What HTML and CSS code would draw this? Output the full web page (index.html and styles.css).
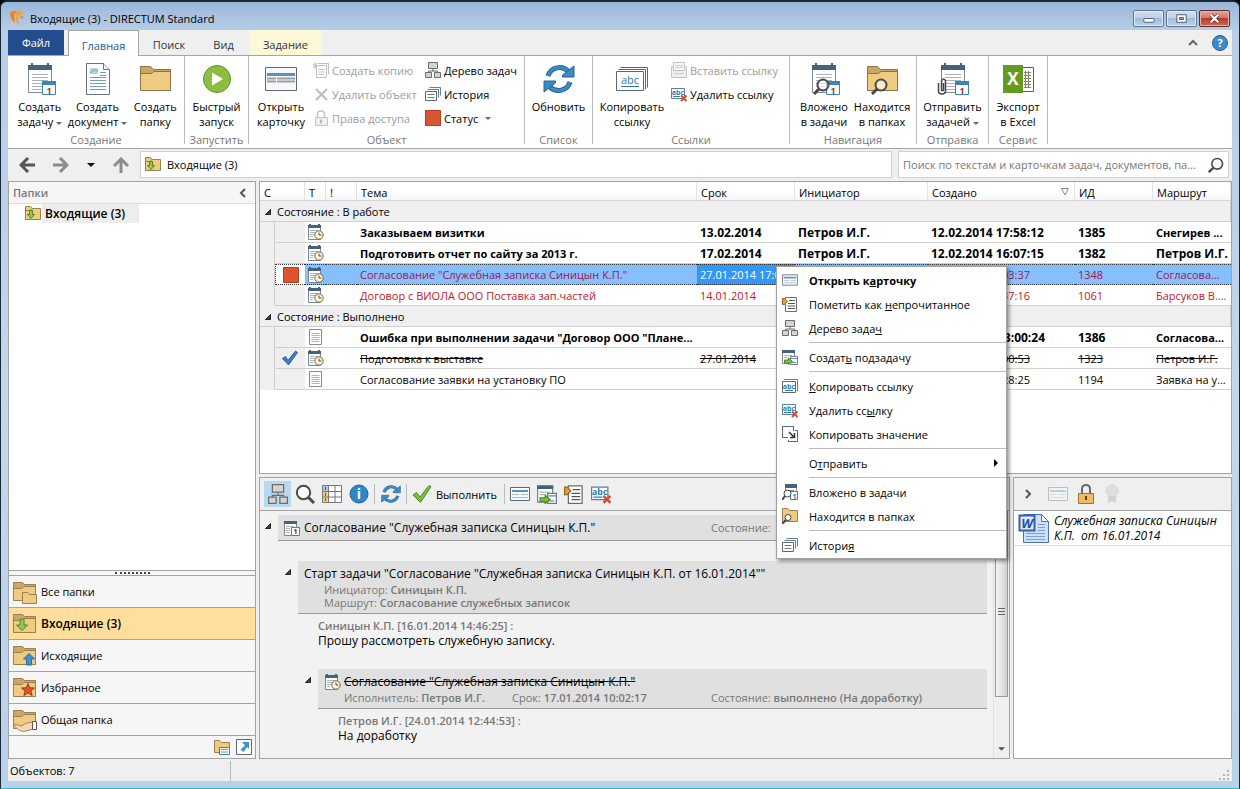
FILE: index.html
```html
<!DOCTYPE html>
<html lang="ru">
<head>
<meta charset="utf-8">
<title>Входящие (3) - DIRECTUM Standard</title>
<link rel="stylesheet" href="styles.css">
</head>
<body>
<svg class="sprite" aria-hidden="true">
  <symbol id="i-logo" viewBox="0 0 16 16"><path d="M1 3q1-2 4-2h3L6 4q-1 1-.5 4L6 13Q1 9 1 3z" fill="#f0831a"/><path d="M7 5q0-3 4-4l4 2-4 2q-2 1-2 3l1 7Q6 11 7 5z" fill="#f9a02b"/><path d="M11 7l2-1 2 1-3 2z" fill="#f0831a"/></symbol>
  <symbol id="i-task" viewBox="0 0 32 32"><path d="M4.500 5.500h23v24h-23z" fill="#fff" stroke="#7b8794"/><path d="M4 2h24v5H4z" fill="#46617c"/><path d="M7 0h2v3H7zM23 0h2v3h-2z" fill="#46617c"/><path d="M8 11.500h16M8 14.500h16M8 17.500h16M8 20.500h10M8 23.500h10M8 26.500h10" stroke="#a9b1b9"/><path d="M18.500 18.500h13v13h-13z" fill="#fff" stroke="#3b84b8"/><path d="M18 18h14v4H18z" fill="#3b84b8"/><text x="25" y="30.500" text-anchor="middle" font-size="9" font-weight="700" fill="#a0303c">1</text></symbol>
  <symbol id="i-doc" viewBox="0 0 32 32"><path d="M4.500.5h17l6 6v25h-23z" fill="#fff" stroke="#6b7680"/><path d="M21.500.5v6h6" fill="#eef" stroke="#6b7680"/><path d="M8 5h8v6H8z" fill="#bcd2da"/><path d="M8 10l4-3 4 1" stroke="#6da1bd" fill="none"/><path d="M18 9.500h6M18 12.500h6M8 14.500h16M8 17.500h16M8 20.500h16M8 23.500h16M8 26.500h16" stroke="#6ba3bd"/></symbol>
  <symbol id="i-folder" viewBox="0 0 32 32"><path d="M1.500 27.500v-24h10l3 3h17v21z" fill="#c9a566" stroke="#8d7546"/><path d="M2 10.500h10l3-2h16V27H2z" fill="#eecb80"/><path d="M2 10.500h10l3-2h16" stroke="#8d7546" fill="none"/></symbol>
  <symbol id="i-play" viewBox="0 0 32 32"><circle cx="16" cy="16" r="13.500" fill="#8cbf3f" stroke="#5f8f2d"/><path d="M11 9.500v13l11-6.500z" fill="#fff"/></symbol>
  <symbol id="i-card" viewBox="0 0 32 32"><path d="M.5 4.500h31v23H.5z" fill="#f6f8fa" stroke="#5f676f"/><path d="M2 10h28v3H2z" fill="#5c93b5"/><path d="M2 15.500h9M12 15.500h18M2 18.500h9M12 18.500h18" stroke="#9aa0a6" stroke-width="2"/></symbol>
  <symbol id="i-card-s" viewBox="0 0 20 16"><path d="M.5 1.500h19v13H.5z" fill="#f8fbfe" stroke="#5f676f"/><path d="M2 5h16" stroke="#5c93b5" stroke-width="2"/><path d="M2 8.500h7M11 8.500h7M2 11.500h16" stroke="#a5b8c8"/></symbol>
  <symbol id="i-refresh" viewBox="0 0 32 32"><path d="M5 13A12 12 0 0 1 25 8M27 19A12 12 0 0 1 7 24" fill="none" stroke="#2a6294" stroke-width="5"/><path d="M5 13A12 12 0 0 1 25 8M27 19A12 12 0 0 1 7 24" fill="none" stroke="#3d8bc4" stroke-width="3"/><path d="M31 3v11H19.500v-2zM1 29V18h11.500v2z" fill="#3d8bc4" stroke="#2a6294"/></symbol>
  <symbol id="i-link" viewBox="0 0 32 32"><path d="M4.500 4.500h27v20M2.500 6.500h27v20" fill="none" stroke="#5f676f"/><path d="M.5 8.500h27v19H.5z" fill="#fff" stroke="#5f676f"/><text x="14" y="21" text-anchor="middle" font-size="11" fill="#2f7cb4">abc</text><path d="M5 23.500h18" stroke="#2f7cb4"/></symbol>
  <symbol id="i-link-s" viewBox="0 0 16 16"><path d="M2 1.500h13.500V13" fill="none" stroke="#5f7f9c"/><path d="M.5 3.500h13v11H.5z" fill="#fff" stroke="#5f676f"/><text x="7" y="11" text-anchor="middle" font-size="7" font-weight="700" fill="#2f7cb4">abc</text><path d="M3 12.500h8" stroke="#2f7cb4"/></symbol>
  <symbol id="i-unlink" viewBox="0 0 16 16"><path d="M.5 2.500h13v10H.5z" fill="#fff" stroke="#5f7f9c"/><text x="7" y="9" text-anchor="middle" font-size="7" font-weight="700" fill="#2f7cb4">abc</text><path d="M2 10.500h7" stroke="#2f7cb4"/><path d="M10 9.500l5.500 5.500M15.500 9.500L10 15" stroke="#cf4f31" stroke-width="2"/></symbol>
  <symbol id="i-paste" viewBox="0 0 16 16"><path d="M.5 4.500h15v11H.5z" fill="#eee" stroke="#c4c4c4"/><path d="M2.500.5h11v8h-11z" fill="#fafafa" stroke="#c4c4c4"/><path d="M4 3.500h8M4 5.500h8M3 11.500h10" stroke="#ccc"/></symbol>
  <symbol id="i-copy" viewBox="0 0 16 16"><path d="M5 1.500h10.500V12M3.500 15.500v-12h10v12z" fill="none" stroke="#c0c0c0"/><path d="M5.500 7.500h6M5.500 10h6M5.500 12.500h6M0 2l4 4M4 1L0 6M2 0v7" stroke="#c0c0c0"/></symbol>
  <symbol id="i-x" viewBox="0 0 16 16"><path d="M3 3l11 11M14 3L3 14" stroke="#bdbdbd" stroke-width="2"/></symbol>
  <symbol id="i-lock-off" viewBox="0 0 16 16"><path d="M4.500 7V4q0-3 3.500-3t3.500 3v3" fill="none" stroke="#c4c4c4" stroke-width="1.500"/><path d="M2.500 7.500h12v8h-12z" fill="#f0f0f0" stroke="#c4c4c4"/><path d="M8 9.500v4" stroke="#bbb" stroke-width="2"/></symbol>
  <symbol id="i-tree" viewBox="0 0 16 16"><path d="M3.500.5h9v6h-9z" fill="#d4d4d4" stroke="#6c6c6c"/><path d="M8 6.500v3M3.500 11V9h9v2" fill="none" stroke="#6c6c6c"/><path d="M.5 10.500h6v5h-6zM9.500 10.500h6v5h-6z" fill="#d4d4d4" stroke="#6c6c6c"/></symbol>
  <symbol id="i-hist" viewBox="0 0 16 16"><path d="M4.500 1.500h11v8M2.500 3.500h11v8" fill="none" stroke="#5f7f9c"/><path d="M.5 5.500h11v9H.5z" fill="#fff" stroke="#5f676f"/><path d="M2.500 8.500h7M2.500 11.500h7" stroke="#777"/></symbol>
  <symbol id="i-red" viewBox="0 0 16 16"><path d="M.5.5h15v15H.5z" fill="#d9542f" stroke="#b23f22"/></symbol>
  <symbol id="i-lens-over" viewBox="0 0 32 32"><circle cx="15" cy="22" r="5.500" fill="#fff" fill-opacity=".6" stroke="#4a4a4a" stroke-width="2"/><path d="M11 26l-5 5" stroke="#4a4a4a" stroke-width="3"/></symbol>
  <symbol id="i-clip" viewBox="0 0 32 32"><path d="M6.500 20v7q-1 1.500-2 0v-9q.5-2 2-2t2 2v10q0 3-3.500 3T1.500 28v-8" fill="#fff" stroke="#444" stroke-width="1.500"/></symbol>
  <symbol id="i-excel" viewBox="0 0 32 32"><path d="M20 4.500h11.500v24H20" fill="#fff" stroke="#55702b"/><path d="M23.500 8v17M26.500 8v17M22 9.500h7M22 12.500h7M22 15.500h7M22 18.500h7M22 21.500h7M22 24.500h7" stroke="#7d8a6b"/><path d="M1 2h20v28H1z" fill="#639a1f"/><text x="11" y="22" text-anchor="middle" font-size="17" font-weight="700" fill="#fff">X</text></symbol>
  <symbol id="i-inbox" viewBox="0 0 16 16"><path d="M.5 13.500v-13h5l2 2h8v11z" fill="#eecb80" stroke="#9a814d"/><path d="M1 4.500h4l2-2h8" fill="none" stroke="#9a814d"/><path d="M4.500 4.500v4h-2L6 12.500l3.500-4h-2v-4z" fill="#8ecb4c" stroke="#4f8430"/></symbol>
  <symbol id="i-taskclock" viewBox="0 0 16 16"><path d="M.5 2.500h12v13H.5z" fill="#fff" stroke="#7b8794"/><path d="M0 1h13v3H0z" fill="#46617c"/><path d="M1 0h2v2H1zM10 0h2v2h-2z" fill="#46617c"/><path d="M2 6.500h8M2 8.500h5M2 10.500h4M2 12.500h3" stroke="#aeb5bb"/><circle cx="11" cy="11" r="4.200" fill="#fff6dc" stroke="#7a6543"/><path d="M11 8.500V11h2.500" fill="none" stroke="#5d4a2f"/></symbol>
  <symbol id="i-task-s" viewBox="0 0 16 16"><path d="M.5 2.500h12v13H.5z" fill="#fff" stroke="#7b8794"/><path d="M0 1h13v3H0z" fill="#46617c"/><path d="M2 6.500h8M2 8.500h4M2 10.500h4M2 12.500h4" stroke="#aeb5bb"/><path d="M7.500 7.500h8v8h-8z" fill="#fff" stroke="#3b84b8"/><text x="11.500" y="14" text-anchor="middle" font-size="7" font-weight="700" fill="#333">1</text></symbol>
  <symbol id="i-note" viewBox="0 0 16 16"><path d="M1.500.5h12v15h-12z" fill="#fff" stroke="#8a8a8a"/><path d="M3.500 4.500h8M3.500 6.500h8M3.500 8.500h8M3.500 10.500h8M3.500 12.500h8" stroke="#b4b4b4"/></symbol>
  <symbol id="i-check" viewBox="0 0 16 16"><path d="M.5 8.500l3-2 2.500 4L13.500 1l2 1.500L6.500 15z" fill="#3d7fbf" stroke="#2c639c"/></symbol>
  <symbol id="i-check-g" viewBox="0 0 20 20"><path d="M1 11l3.500-2.500 3.500 4.500L17 1.500l2 1L8.500 18.500z" fill="#7fbf3b" stroke="#4b8a2c"/></symbol>
  <symbol id="i-unread" viewBox="0 0 16 16"><path d="M3.500 1.500h11v14h-11z" fill="#fff" stroke="#6c6c6c"/><path d="M7 4.500h6M6 7.500h7M6 10h7M6 12.500h7" stroke="#555"/><path d="M.5 2.500h2l3 3-3 3h-2z" fill="#e8a13a" stroke="#9a651c"/></symbol>
  <symbol id="i-sub" viewBox="0 0 16 16"><path d="M.5 2.500h12v12H.5z" fill="#fff" stroke="#7b8794"/><path d="M0 1h13v3H0z" fill="#46617c"/><path d="M2 6.500h8M2 8.500h4" stroke="#aeb5bb"/><path d="M8.500 7.500h7v8h-7z" fill="#fff" stroke="#5f7f9c"/><path d="M9 9.500h6M10 13.500h4" stroke="#7a8b99"/><path d="M2.500 11h4V9l4 3.500-4 3V14h-4z" fill="#7fbf3b" stroke="#4b8a2c"/></symbol>
  <symbol id="i-copyval" viewBox="0 0 16 16"><path d="M6 11.500H.5V.5h11V5" fill="#fff" stroke="#5f676f"/><path d="M13 4.500h2.500v11h-9V14" fill="none" stroke="#5f676f"/><path d="M7 6l5 5M12.500 7v4.500H8" fill="none" stroke="#333" stroke-width="1.500"/></symbol>
  <symbol id="i-intask" viewBox="0 0 16 16"><path d="M3.500 3v5M14.500 3v5M6 6.500h6" stroke="#8a8a8a"/><path d="M3 0h12v4H3z" fill="#46617c"/><path d="M8.500 7.500h7v8h-7z" fill="#fff" stroke="#3b84b8"/><text x="12.500" y="14.500" text-anchor="middle" font-size="7" font-weight="700" fill="#2f7cb4">1</text><circle cx="5.500" cy="9.500" r="3.500" fill="#fff" stroke="#444"/><path d="M3 12l-3 4" stroke="#444" stroke-width="2"/></symbol>
  <symbol id="i-infolder" viewBox="0 0 16 16"><path d="M.5 13.500v-13h5l2 2h8v11z" fill="#eecb80" stroke="#9a814d"/><circle cx="6" cy="9.500" r="3" fill="#fff" stroke="#444"/><path d="M4 12l-4 4" stroke="#444" stroke-width="2"/></symbol>
  <symbol id="i-lens" viewBox="0 0 20 20"><circle cx="8.500" cy="8.500" r="6.700" fill="#f7fafc" stroke="#4a4a4a" stroke-width="2"/><path d="M13.500 13.500l5.500 5.500" stroke="#4a4a4a" stroke-width="3"/></symbol>
  <symbol id="i-grid" viewBox="0 0 20 20"><path d="M.5 1.500h19v17H.5z" fill="#fff" stroke="#777"/><path d="M1 2h5v5H1z" fill="#a3cde8"/><path d="M1 7h5v11H1z" fill="#f0cf80"/><path d="M6.500 2v16M13 2v16M1 7.500h18M1 13h18" stroke="#777"/><path d="M3.500 3v3M3.500 9v3M3.500 14v3" stroke="#555"/></symbol>
  <symbol id="i-info" viewBox="0 0 20 20"><circle cx="10" cy="10" r="9" fill="#2f86c9" stroke="#215f93"/><text x="10" y="15" text-anchor="middle" font-size="14" font-weight="700" fill="#fff">i</text></symbol>
  <symbol id="i-help" viewBox="0 0 16 16"><circle cx="8" cy="8" r="7.500" fill="#3d8bc9" stroke="#215f93"/><text x="8" y="12" text-anchor="middle" font-size="11" font-weight="700" fill="#fff">?</text></symbol>
  <symbol id="i-lock" viewBox="0 0 16 20"><path d="M4 9V5q0-4 4-4t4 4v4" fill="none" stroke="#6b6b6b" stroke-width="2"/><path d="M.5 9.500h15v10H.5z" fill="#eebb66" stroke="#9a7436"/><path d="M8 12v4" stroke="#5b431c" stroke-width="2"/></symbol>
  <symbol id="i-seal" viewBox="0 0 16 20"><path d="M4 11v8l4-2 4 2v-8" fill="#d3d3d3"/><circle cx="8" cy="7" r="6" fill="#dedede" stroke="#ccc" stroke-dasharray="2 1"/></symbol>
  <symbol id="i-word" viewBox="0 0 32 32"><path d="M5.500 2.500h18l7 7v21h-25z" fill="#cfdff8" stroke="#4870b8"/><path d="M23.500 2.500v7h7z" fill="#fff" stroke="#4870b8"/><path d="M8 21.500h19M8 24.500h19M8 27.500h19M20 12.500h7M20 15.500h7M20 18.500h7" stroke="#7f9fd6"/><path d="M1.500 3.500h15v15h-15z" fill="#dfe9fb" stroke="#3560b0" stroke-width="2"/><text x="9" y="16" text-anchor="middle" font-size="13" font-weight="700" font-style="italic" fill="#2450a6">W</text></symbol>
  <symbol id="i-nav" viewBox="0 0 24 24"><path d="M.5 20.500v-18h9l2 2h11v16z" fill="#caa768" stroke="#9a814d"/><path d="M1 8.500h8l2-2h11V20H1z" fill="#eecb80"/><path d="M1 8.500h8l2-2h11" fill="none" stroke="#9a814d"/></symbol>
  <symbol id="o-all" viewBox="0 0 24 24"><path d="M9.500 23.500v-11h5l2 2h7v9z" fill="#eecb80" stroke="#9a814d"/></symbol>
  <symbol id="o-in" viewBox="0 0 24 24"><path d="M7 7v6H3.500L9 18.500 14.500 13H11V7z" fill="#8ecb4c" stroke="#4f8430"/></symbol>
  <symbol id="o-out" viewBox="0 0 24 24"><path d="M13.500 21v-6h-3l5.500-5.500 5.500 5.500h-3v6z" fill="#3f93cc" stroke="#2c6a99"/></symbol>
  <symbol id="o-star" viewBox="0 0 24 24"><path d="M15 7.500l1.800 4.200 4.700.3-3.600 3 1.200 4.500-4.100-2.500-4.100 2.500 1.200-4.500-3.600-3 4.700-.3z" fill="#d9542f" stroke="#a83c1c"/></symbol>
  <symbol id="o-hand" viewBox="0 0 24 24"><path d="M0 16q5 1 8 2l6-3 6-1v7l-7 2q-7 2-13-7z" fill="#f3d9b8" stroke="#a98559"/><path d="M19.500 13.500h4v8h-4z" fill="#fff" stroke="#555"/></symbol>
  <symbol id="i-foldlist" viewBox="0 0 16 16"><path d="M.5 13.500v-12h5l2 2h8v10z" fill="#eecb80" stroke="#9a814d"/><path d="M5.500 8.500h10v7h-10z" fill="#fff" stroke="#4d7ba3"/><path d="M7 10.500h7M7 13h7" stroke="#4d9bd0"/></symbol>
  <symbol id="i-short" viewBox="0 0 16 16"><path d="M.5.5h15v15H.5z" fill="#fff" stroke="#5b6b7a"/><path d="M6 3h7v7l-2-2-3.500 5-3-2.500L9 6.500z" fill="#3f93cc"/></symbol>
  <symbol id="a-left" viewBox="0 0 16 16"><path d="M16 8H3M9 1L2 8l7 7" fill="none" stroke="currentColor" stroke-width="3"/></symbol>
  <symbol id="a-chev" viewBox="0 0 8 10"><path d="M6 1L2 5l4 4" fill="none" stroke="currentColor" stroke-width="2"/></symbol>
  <symbol id="a-down" viewBox="0 0 8 4"><path d="M0 0h8L4 4z" fill="currentColor"/></symbol>
  <symbol id="a-node" viewBox="0 0 8 8"><path d="M6.500 1.500v5h-5z" fill="#444" stroke="#222"/></symbol>
</svg>

<div class="window">
  <header class="titlebar">
    <svg class="s16"><use href="#i-logo"/></svg>
    <h1 class="caption">Входящие (3) - DIRECTUM Standard</h1>
    <div class="winbtns">
      <button class="winbtn" aria-label="Свернуть"><svg viewBox="0 0 30 16"><rect x="10" y="8" width="11" height="4" rx="1" fill="#fff" stroke="#4b5a70"/></svg></button>
      <button class="winbtn" aria-label="Развернуть"><svg viewBox="0 0 30 16"><rect x="10" y="4" width="10" height="8" fill="#fff" stroke="#4b5a70"/><rect x="13" y="7" width="4" height="2" fill="#9db4d2" stroke="#4b5a70"/></svg></button>
      <button class="winbtn winbtn-close" aria-label="Закрыть"><svg viewBox="0 0 30 16"><path d="M11 4l8 8M19 4l-8 8" stroke="#5b2b30" stroke-width="4"/><path d="M11 4l8 8M19 4l-8 8" stroke="#fff" stroke-width="2.500"/></svg></button>
    </div>
  </header>

  <div class="client">
    <nav class="tabs">
      <button class="tab tab-file">Файл</button>
      <button class="tab tab-active">Главная</button>
      <button class="tab">Поиск</button>
      <button class="tab tab-narrow">Вид</button>
      <button class="tab tab-context">Задание</button>
      <span class="tabs-tools">
        <button class="bare" aria-label="Свернуть ленту"><svg class="up-chev" viewBox="0 0 10 8"><path d="M1 6l4-4 4 4" fill="none" stroke="#666" stroke-width="2"/></svg></button>
        <button class="bare" aria-label="Справка"><svg class="s16"><use href="#i-help"/></svg></button>
      </span>
    </nav>

    <section class="ribbon">
      <div class="group g-create">
        <div class="tools">
          <button class="big"><svg class="s32"><use href="#i-task"/></svg><span>Создать<br>задачу <svg class="dd"><use href="#a-down"/></svg></span></button>
          <button class="big"><svg class="s32"><use href="#i-doc"/></svg><span>Создать<br>документ <svg class="dd"><use href="#a-down"/></svg></span></button>
          <button class="big"><svg class="s32"><use href="#i-folder"/></svg><span>Создать<br>папку</span></button>
        </div>
        <div class="glabel">Создание</div>
      </div>
      <div class="group g-run">
        <div class="tools"><button class="big"><svg class="s32"><use href="#i-play"/></svg><span>Быстрый<br>запуск</span></button></div>
        <div class="glabel">Запустить</div>
      </div>
      <div class="group g-object">
        <div class="tools">
          <button class="big big-wide"><svg class="s32"><use href="#i-card"/></svg><span>Открыть<br>карточку</span></button>
          <div class="stack stack-first">
            <button class="small" disabled><svg class="s16"><use href="#i-copy"/></svg>Создать копию</button>
            <button class="small" disabled><svg class="s16"><use href="#i-x"/></svg>Удалить объект</button>
            <button class="small" disabled><svg class="s16"><use href="#i-lock-off"/></svg>Права доступа</button>
          </div>
          <div class="stack">
            <button class="small"><svg class="s16"><use href="#i-tree"/></svg>Дерево задач</button>
            <button class="small"><svg class="s16"><use href="#i-hist"/></svg>История</button>
            <button class="small"><svg class="s16"><use href="#i-red"/></svg>Статус <svg class="dd dd-gap"><use href="#a-down"/></svg></button>
          </div>
        </div>
        <div class="glabel">Объект</div>
      </div>
      <div class="group g-list">
        <div class="tools"><button class="big big-wide"><svg class="s32"><use href="#i-refresh"/></svg><span>Обновить</span></button></div>
        <div class="glabel">Список</div>
      </div>
      <div class="group g-links">
        <div class="tools">
          <button class="big big-xwide"><svg class="s32"><use href="#i-link"/></svg><span>Копировать<br>ссылку</span></button>
          <div class="stack">
            <button class="small" disabled><svg class="s16"><use href="#i-paste"/></svg>Вставить ссылку</button>
            <button class="small"><svg class="s16"><use href="#i-unlink"/></svg>Удалить ссылку</button>
          </div>
        </div>
        <div class="glabel">Ссылки</div>
      </div>
      <div class="group g-navi">
        <div class="tools">
          <button class="big"><svg class="s32"><use href="#i-task"/><use href="#i-lens-over"/></svg><span>Вложено<br>в задачи</span></button>
          <button class="big"><svg class="s32"><use href="#i-folder"/><use href="#i-lens-over"/></svg><span>Находится<br>в папках</span></button>
        </div>
        <div class="glabel">Навигация</div>
      </div>
      <div class="group g-send">
        <div class="tools"><button class="big big-wide"><svg class="s32"><use href="#i-task"/><use href="#i-clip"/></svg><span>Отправить<br>задачей <svg class="dd"><use href="#a-down"/></svg></span></button></div>
        <div class="glabel">Отправка</div>
      </div>
      <div class="group g-serv">
        <div class="tools"><button class="big"><svg class="s32"><use href="#i-excel"/></svg><span>Экспорт<br>в Excel</span></button></div>
        <div class="glabel">Сервис</div>
      </div>
    </section>

    <div class="address">
      <div class="history">
        <button class="bare c-dark" aria-label="Назад"><svg class="s16"><use href="#a-left"/></svg></button>
        <button class="bare c-mid" aria-label="Вперёд"><svg class="s16 flip"><use href="#a-left"/></svg></button>
        <button class="bare c-black" aria-label="Журнал"><svg class="dd"><use href="#a-down"/></svg></button>
        <button class="bare c-mid" aria-label="Вверх"><svg class="s16 turn"><use href="#a-left"/></svg></button>
      </div>
      <div class="field field-path"><svg class="s16"><use href="#i-inbox"/></svg><input aria-label="Адрес" value="Входящие (3)"></div>
      <div class="field field-search"><input type="text" aria-label="Поиск" placeholder="Поиск по текстам и карточкам задач, документов, па..."><svg class="s16 mirror"><use href="#i-lens"/></svg></div>
    </div>

    <main class="work">
      <aside class="side">
        <div class="side-head"><h2>Папки</h2><button class="bare c-dark" aria-label="Скрыть"><svg class="chev"><use href="#a-chev"/></svg></button></div>
        <div class="tree"><a class="tree-item" href="#"><svg class="s16"><use href="#i-inbox"/></svg><b>Входящие (3)</b></a></div>
        <div class="grip"><i></i></div>
        <nav class="nav">
          <a href="#"><svg class="s24"><use href="#i-nav"/><use href="#o-all"/></svg>Все папки</a>
          <a href="#" class="on"><svg class="s24"><use href="#i-nav"/><use href="#o-in"/></svg>Входящие (3)</a>
          <a href="#"><svg class="s24"><use href="#i-nav"/><use href="#o-out"/></svg>Исходящие</a>
          <a href="#"><svg class="s24"><use href="#i-nav"/><use href="#o-star"/></svg>Избранное</a>
          <a href="#"><svg class="s24"><use href="#i-nav"/><use href="#o-hand"/></svg>Общая папка</a>
        </nav>
        <div class="side-foot">
          <button class="bare" aria-label="Список папок"><svg class="s16"><use href="#i-foldlist"/></svg></button>
          <button class="bare" aria-label="Ярлыки"><svg class="s16"><use href="#i-short"/></svg></button>
        </div>
      </aside>

      <div class="right">
        <section class="list">
          <table class="grid">
            <colgroup><col class="c-ind"><col class="c-s"><col class="c-t"><col class="c-i"><col><col class="c-term"><col class="c-init"><col class="c-made"><col class="c-id"><col class="c-route"></colgroup>
            <thead><tr><th colspan="2">С</th><th>Т</th><th>!</th><th>Тема</th><th>Срок</th><th>Инициатор</th><th><span class="sorted">Создано<svg class="sort" viewBox="0 0 8 8"><path d="M.5.5h7L4 7z" fill="none" stroke="#888"/></svg></span></th><th>ИД</th><th>Маршрут</th></tr></thead>
            <tbody>
              <tr class="grp"><td colspan="10"><svg class="node"><use href="#a-node"/></svg>Состояние : В работе</td></tr>
              <tr class="new"><td></td><td></td><td><svg class="s16"><use href="#i-taskclock"/></svg></td><td></td><td>Заказываем визитки</td><td class="num">13.02.2014</td><td class="num">Петров И.Г.</td><td class="num">12.02.2014 17:58:12</td><td class="num">1385</td><td>Снегирев ...</td></tr>
              <tr class="new"><td></td><td></td><td><svg class="s16"><use href="#i-taskclock"/></svg></td><td></td><td>Подготовить отчет по сайту за 2013 г.</td><td class="num">17.02.2014</td><td class="num">Петров И.Г.</td><td class="num">12.02.2014 16:07:15</td><td class="num">1382</td><td class="num">Петров И.Г.</td></tr>
              <tr class="late sel"><td></td><td><svg class="s16"><use href="#i-red"/></svg></td><td><svg class="s16"><use href="#i-taskclock"/></svg></td><td></td><td>Согласование "Служебная записка Синицын К.П."</td><td class="cell-on">27.01.2014 17:0</td><td></td><td class="tail">03:37</td><td>1348</td><td>Согласова...</td></tr>
              <tr class="late"><td></td><td></td><td><svg class="s16"><use href="#i-taskclock"/></svg></td><td></td><td>Договор с ВИОЛА ООО Поставка зап.частей</td><td>14.01.2014</td><td></td><td class="tail">37:16</td><td>1061</td><td>Барсуков В....</td></tr>
              <tr class="grp"><td colspan="10"><svg class="node"><use href="#a-node"/></svg>Состояние : Выполнено</td></tr>
              <tr class="new"><td></td><td></td><td><svg class="s16"><use href="#i-note"/></svg></td><td></td><td>Ошибка при выполнении задачи "Договор ООО "Плане...</td><td></td><td></td><td class="num tail tail-new">8:00:24</td><td class="num">1386</td><td>Согласова...</td></tr>
              <tr class="done"><td></td><td><svg class="s16"><use href="#i-check"/></svg></td><td><svg class="s16"><use href="#i-taskclock"/></svg></td><td></td><td>Подготовка к выставке</td><td>27.01.2014</td><td></td><td class="tail">00:53</td><td>1323</td><td>Петров И.Г.</td></tr>
              <tr><td></td><td></td><td><svg class="s16"><use href="#i-note"/></svg></td><td></td><td>Согласование заявки на установку ПО</td><td></td><td></td><td class="tail">28:25</td><td>1194</td><td>Заявка на у...</td></tr>
            </tbody>
          </table>
        </section>

        <section class="preview">
          <div class="thread">
            <div class="bar">
              <button class="tb tb-on" aria-label="Дерево"><svg class="s20"><use href="#i-tree"/></svg></button>
              <button class="tb" aria-label="Найти"><svg class="s20"><use href="#i-lens"/></svg></button>
              <button class="tb" aria-label="Таблица"><svg class="s20"><use href="#i-grid"/></svg></button>
              <button class="tb" aria-label="Сведения"><svg class="s20"><use href="#i-info"/></svg></button>
              <span class="vsep"></span>
              <button class="tb" aria-label="Обновить"><svg class="s20"><use href="#i-refresh"/></svg></button>
              <span class="vsep"></span>
              <button class="tb tb-text"><svg class="s20"><use href="#i-check-g"/></svg>Выполнить</button>
              <span class="vsep"></span>
              <button class="tb" aria-label="Карточка"><svg class="s20"><use href="#i-card-s"/></svg></button>
              <button class="tb" aria-label="Подзадача"><svg class="s20"><use href="#i-sub"/></svg></button>
              <button class="tb" aria-label="Непрочитанное"><svg class="s20"><use href="#i-unread"/></svg></button>
              <button class="tb" aria-label="Удалить ссылку"><svg class="s20"><use href="#i-unlink"/></svg></button>
            </div>
            <div class="scroll">
              <div class="posts">
                <article class="post lvl1">
                  <svg class="node"><use href="#a-node"/></svg>
                  <div class="card card-root"><svg class="s16"><use href="#i-task-s"/></svg><h3>Согласование "Служебная записка Синицын К.П."</h3><span class="meta state">Состояние:</span></div>
                </article>
                <article class="post lvl2">
                  <svg class="node"><use href="#a-node"/></svg>
                  <div class="card card-start"><h3>Старт задачи "Согласование "Служебная записка Синицын К.П. от 16.01.2014""</h3>
                    <p class="meta">Инициатор: <b>Синицын К.П.</b></p><p class="meta">Маршрут: <b>Согласование служебных записок</b></p></div>
                </article>
                <div class="say say2"><b>Синицын К.П. [16.01.2014 14:46:25] :</b><p>Прошу рассмотреть служебную записку.</p></div>
                <article class="post lvl3">
                  <svg class="node"><use href="#a-node"/></svg>
                  <div class="card card-job"><div class="job-title"><svg class="s16"><use href="#i-taskclock"/></svg><h3><s>Согласование "Служебная записка Синицын К.П."</s></h3></div>
                    <div class="meta job-meta"><span>Исполнитель: <b>Петров И.Г.</b></span><span>Срок: <b>17.01.2014 10:02:17</b></span><span class="state">Состояние: <b>выполнено (На доработку)</b></span></div></div>
                </article>
                <div class="say say3"><b>Петров И.Г. [24.01.2014 12:44:53] :</b><p>На доработку</p></div>
              </div>
              <div class="vbar"><div class="thumb"><i></i></div><svg class="dd c-dark"><use href="#a-down"/></svg></div>
            </div>
          </div>
          <div class="files">
            <div class="bar bar-files">
              <button class="bare c-dark" aria-label="Показать"><svg class="chev flip"><use href="#a-chev"/></svg></button>
              <button class="bare faded" aria-label="Карточка" disabled><svg class="s20"><use href="#i-card-s"/></svg></button>
              <button class="bare" aria-label="Доступ"><svg class="lock"><use href="#i-lock"/></svg></button>
              <button class="bare" aria-label="Подпись" disabled><svg class="lock"><use href="#i-seal"/></svg></button>
            </div>
            <div class="file-list"><a class="file" href="#"><svg class="s32"><use href="#i-word"/></svg><em>Служебная записка Синицын К.П.&nbsp; от 16.01.2014</em></a></div>
          </div>
        </section>
      </div>
    </main>

    <footer class="status"><span class="count">Объектов: 7</span><svg class="sizer" viewBox="0 0 12 12"><path d="M9 1h2v2H9zM5 5h2v2H5zM9 5h2v2H9zM1 9h2v2H1zM5 9h2v2H5zM9 9h2v2H9z" fill="#b5b5b5"/></svg></footer>
  </div>

  <menu class="context">
    <li><button><svg class="s16"><use href="#i-card-s"/></svg><b>Открыть к<u>а</u>рточку</b></button></li>
    <li><button><svg class="s16"><use href="#i-unread"/></svg><span>Пометить как <u>н</u>епрочитанное</span></button></li>
    <li><button><svg class="s16"><use href="#i-tree"/></svg><span>Дерево зада<u>ч</u></span></button></li>
    <li class="line"></li>
    <li><button><svg class="s16"><use href="#i-sub"/></svg><span>Создат<u>ь</u> подзадачу</span></button></li>
    <li class="line"></li>
    <li><button><svg class="s16"><use href="#i-link-s"/></svg><span><u>К</u>опировать ссылку</span></button></li>
    <li><button><svg class="s16"><use href="#i-unlink"/></svg><span>Удалить сс<u>ы</u>лку</span></button></li>
    <li><button><svg class="s16"><use href="#i-copyval"/></svg><span>Копировать значение</span></button></li>
    <li class="line"></li>
    <li><button><svg class="s16"></svg><span>О<u>т</u>править</span><svg class="more" viewBox="0 0 4 8"><path d="M0 0v8l4-4z"/></svg></button></li>
    <li class="line"></li>
    <li><button><svg class="s16"><use href="#i-intask"/></svg><span>Вложено в задачи</span></button></li>
    <li><button><svg class="s16"><use href="#i-infolder"/></svg><span>Находится в папках</span></button></li>
    <li class="line"></li>
    <li><button><svg class="s16"><use href="#i-hist"/></svg><span>Истори<u>я</u></span></button></li>
  </menu>
</div>
</body>
</html>
```
FILE: styles.css
```css
* { box-sizing: border-box; }
html, body { margin: 0; height: 100%; background: #000; }
body, button, input, table { font: 11px/15px "Open Sans", "Noto Sans", sans-serif; color: #000; }
button { border: 0; background: none; padding: 0; margin: 0; }
h1, h2, h3, p, menu { margin: 0; padding: 0; font: inherit; list-style: none; }
a { color: inherit; text-decoration: none; }
svg { display: block; flex: none; }
.sprite { display: none; }
.s16 { width: 16px; height: 16px; }
.s20 { width: 20px; height: 20px; }
.s24 { width: 24px; height: 24px; }
.s32 { width: 32px; height: 32px; }
.dd { display: inline-block; width: 6px; height: 3px; vertical-align: middle; color: #666; }
.dd-gap { margin-left: 4px; }
.flip { transform: rotate(180deg); }
.turn { transform: rotate(90deg); }
.mirror { transform: scaleX(-1); }
.bare { display: flex; align-items: center; justify-content: center; }
.c-dark { color: #555; }
.c-mid { color: #8c8c8c; }
.c-black, .c-black .dd { color: #111; }

.window { position: relative; display: flex; flex-direction: column; min-height: 100vh; padding: 0 7px 7px; background: linear-gradient(#9ab6d9, #b9cfe8 30px, #b9cfe8 120px, #c3d7ec 400px, #bad1ea); border: 1px solid #1b2836; border-top-width: 2px; border-bottom-color: #32b6c8; border-radius: 7px 7px 0 0; }
.titlebar { display: flex; align-items: center; gap: 5px; height: 28px; padding: 4px 2px 0 1px; }
.caption { flex: 1; }
.winbtns { display: flex; gap: 2px; }
.winbtn { width: 31px; height: 17px; border: 1px solid #5f7591; border-radius: 2px; background: linear-gradient(#d3e0ef, #bccfe5 50%, #a2bbd9 50%, #bcd2ea); box-shadow: inset 0 0 0 1px #dfeaf6; }
.winbtn svg { width: 100%; height: 15px; }
.winbtn-close { border-color: #5b2b30; background: linear-gradient(#e0a59b, #cf7466 50%, #b83a2c 50%, #cf6a52); box-shadow: inset 0 0 0 1px #e5b3a8; }

.client { flex: 1; display: flex; flex-direction: column; background: #efefef; }
.tabs { display: flex; align-items: stretch; height: 26px; border-bottom: 1px solid #a5a5a5; }
.tab { width: 60px; padding-top: 3px; color: #333; }
.tab-file { width: 56px; padding: 0 0 1px; background: #234d8c; color: #fff; }
.tab-active { width: 71px; margin: 0 0 -1px 4px; background: #fff; border: 1px solid #a5a5a5; border-bottom: 0; color: #2b579a; }
.tab-narrow { width: 49px; }
.tab-context { width: 73px; margin-left: 1px; background: #fdf8d8; }
.tabs-tools { display: flex; align-items: center; gap: 14px; margin-left: auto; padding-right: 4px; }
.up-chev { width: 10px; height: 8px; }

.ribbon { display: flex; height: 93px; background: #fff; border-bottom: 1px solid #a5a5a5; }
.group { display: flex; flex-direction: column; justify-content: space-between; margin-bottom: 4px; border-right: 1px solid #bbb; flex: none; }
.tools { display: flex; justify-content: center; }
.glabel { text-align: center; color: #777; margin-bottom: -3px; }
.g-create { width: 177px; }
.g-create .tools { padding-left: 3px; }
.g-run { width: 64px; }
.g-object { width: 276px; }
.g-list { width: 68px; }
.g-links { width: 197px; }
.g-navi { width: 127px; }
.g-send { width: 72px; }
.g-serv { width: 59px; }
.g-object .tools, .g-links .tools { justify-content: flex-start; }
.big { display: flex; flex-direction: column; align-items: center; gap: 4px; width: 58px; padding-top: 7px; white-space: nowrap; }
.big-wide { width: 64px; }
.big-xwide { width: 78px; }
.stack { padding-top: 2px; }
.stack-first { width: 112px; }
.small { display: flex; align-items: center; gap: 3px; height: 24px; white-space: nowrap; }
.small:disabled { color: #9c9c9c; }

.address { display: flex; gap: 6px; height: 32px; padding: 2px 3px 3px 11px; align-items: stretch; }
.history { display: flex; align-items: center; gap: 18px; width: 115px; }
.history .dd { width: 8px; height: 4px; }
.field { display: flex; align-items: center; gap: 6px; background: #fff; border: 1px solid #d2d2d2; padding: 0 4px; }
.field input { flex: 1; min-width: 0; border: 0; padding: 0; background: none; outline: 0; }
.field-path { flex: 1; }
.field-search { width: 331px; }
.field input::placeholder { color: #777; opacity: 1; }

.work { flex: 1; display: flex; gap: 3px; min-height: 0; }
.side { display: flex; flex-direction: column; width: 248px; border: 1px solid #a3a3a3; background: #fff; }
.side-head { display: flex; justify-content: space-between; align-items: center; height: 22px; padding: 0 8px 0 4px; background: #f6f6f6; border-bottom: 1px solid #ddd; color: #777; }
.side-head h2 { font-weight: 600; }
.chev { width: 8px; height: 10px; }
.tree { flex: 1; padding-left: 16px; }
.tree-item { display: inline-flex; align-items: center; gap: 4px; height: 19px; background: linear-gradient(90deg, #fff 17px, #ededed 17px); padding-right: 14px; }
.tree-item b { font-size: 12px; font-weight: 600; }
.grip { display: flex; justify-content: center; align-items: center; height: 5px; border-top: 1px solid #a3a3a3; background: #f6f6f6; }
.grip i { width: 35px; border-top: 2px dotted #444; }
.nav a { display: flex; align-items: center; gap: 4px; height: 32px; padding-left: 4px; border-top: 1px solid #a3a3a3; background: #f6f6f6; }
.nav .on { background: #ffdf9b; font-size: 12px; font-weight: 600; }
.side-foot { display: flex; justify-content: flex-end; align-items: center; gap: 6px; height: 23px; padding-right: 3px; border-top: 1px solid #a3a3a3; background: #f6f6f6; }

.right { flex: 1; min-width: 0; display: flex; flex-direction: column; gap: 3px; }
.list { flex: 1; background: #fff; border: 1px solid #a3a3a3; overflow: hidden; }
.grid { width: 100%; table-layout: fixed; border-collapse: separate; border-spacing: 0; }
.grid th { height: 19px; padding: 2px 4px 0; text-align: left; font-weight: 400; border-bottom: 1px solid #d5d5d5; border-right: 1px solid #e3e3e3; background: linear-gradient(#fff 50%, #f4f6f8); }
.grid td { height: 21px; padding: 0 3px; white-space: nowrap; border-bottom: 1px solid #d0d0d0; }
.grid td:first-child { background: #efefef; border-bottom-color: #efefef; border-right: 1px solid #d0d0d0; }
.grid td:nth-child(2) { background: #efefef; padding-left: 7px; }
.grid td:nth-child(3) { padding-left: 3px; }
.grid .grp td:first-child { padding-left: 4px; border-bottom-color: #d0d0d0; }
.grp .node { display: inline-block; margin-right: 5px; }
.node { width: 8px; height: 8px; }
.c-ind { width: 15px; }
.c-s { width: 30px; }
.c-t { width: 21px; }
.c-i { width: 31px; }
.c-term { width: 98px; }
.c-init { width: 133px; }
.c-made { width: 147px; }
.c-id { width: 78px; }
.c-route { width: 78px; }
.sorted { display: flex; align-items: center; justify-content: space-between; padding-right: 1px; }
.sort { width: 8px; height: 8px; }
.new { font-weight: 700; }
.grid .num { font-size: 12px; }
.late { color: #c8142b; }
.sel td { background: #86bffc; color: #a3164f; border-top: 1px dotted #333; border-bottom: 1px dotted #333; }
.grid .sel td:nth-child(2) { background: #fff; border-left: 1px dotted #333; }
.grid .sel td:first-child { border-top: 0; }
.grid .sel .cell-on { background: #3397f3; color: #fff; }
.done { text-decoration: line-through; }
.grid .tail { text-align: right; padding-right: 45px; }
.grid .tail-new { padding-right: 30px; }

.preview { display: flex; gap: 3px; height: 282px; }
.thread { flex: 1; min-width: 0; display: flex; flex-direction: column; border: 1px solid #a3a3a3; background: #f2f2f2; }
.bar { display: flex; align-items: center; height: 33px; padding-left: 4px; border-bottom: 1px solid #a3a3a3; background: #efefef; }
.tb { display: flex; align-items: center; justify-content: center; gap: 4px; width: 27px; height: 26px; }
.tb-on { background: #b7d8ef; }
.tb-text { width: auto; padding: 0 5px 0 3px; }
.vsep { width: 1px; height: 20px; margin: 0 2px; background: #bbb; }
.scroll { flex: 1; display: flex; min-height: 0; }
.posts { flex: 1; min-width: 0; padding: 4px 6px 0 4px; }
.post { display: flex; gap: 6px; }
.post > .node { margin-top: 7px; }
.card { flex: 1; background: #e0e0e0; border-bottom: 1px solid #999; }
.card h3, .say p { font-size: 12px; line-height: 18px; white-space: nowrap; }
.meta { font-size: 11px; line-height: 13px; color: #777; }
.meta b, .say b { font-weight: 600; }
.card-root { display: flex; align-items: center; gap: 4px; height: 26px; padding-left: 6px; }
.card-root h3 { flex: 1; }
.state { width: 276px; }
.lvl2 { padding: 20px 0 0 20px; }
.card-start { padding: 4px 6px; height: 53px; }
.card-start .meta { padding-left: 20px; }
.say { color: #777; font-size: 11px; line-height: 13px; }
.say p { color: #000; }
.say2 { padding: 5px 0 0 54px; }
.lvl3 { padding: 19px 0 0 40px; }
.card-job { padding: 4px 0 4px 7px; height: 40px; }
.job-title { display: flex; gap: 3px; align-items: center; height: 18px; }
.job-meta { display: flex; padding-left: 19px; }
.job-meta span:first-child { width: 168px; }
.job-meta .state { margin-left: auto; }
.say3 { padding: 5px 0 0 74px; }
.vbar { display: flex; flex-direction: column; align-items: center; justify-content: space-between; width: 16px; padding-bottom: 7px; background: #f0f0f0; border-left: 1px solid #e0e0e0; }
.vbar .dd { width: 7px; height: 4px; }
.thumb { display: flex; align-items: center; justify-content: center; width: 13px; height: 186px; border: 1px solid #999; background: linear-gradient(90deg, #f3f3f3, #e4e4e4 50%, #cfcfcf); }
.thumb i { width: 7px; height: 8px; margin-top: 16px; background: repeating-linear-gradient(#666 0 1px, transparent 1px 3px); }

.files { width: 219px; display: flex; flex-direction: column; border: 1px solid #a3a3a3; background: #fff; }
.bar-files { gap: 10px; padding-left: 10px; }
.bar-files .faded { margin-left: 6px; }
.faded { opacity: .35; }
.lock { width: 16px; height: 20px; }
.file { display: flex; align-items: center; gap: 4px; height: 35px; padding-left: 4px; border-bottom: 1px solid #ddd; font-size: 12px; }

.status { display: flex; justify-content: space-between; align-items: flex-end; height: 22px; padding: 2px 2px 0; }
.count { width: 221px; line-height: 20px; border-right: 1px solid #bbb; }
.sizer { width: 12px; height: 12px; }

.context { position: absolute; left: 775px; top: 264px; width: 231px; padding: 1px 0; background: #fff; border: 1px solid #a0a0a0; box-shadow: 2px 2px 4px rgba(0, 0, 0, .45); }
.context button { display: flex; align-items: center; gap: 11px; width: 100%; height: 24px; padding: 0 8px 0 5px; text-align: left; white-space: nowrap; }
.context .line { height: 1px; margin: 2px 0 2px 32px; background: #bcbcbc; }
.more { width: 4px; height: 8px; margin-left: auto; }
```
